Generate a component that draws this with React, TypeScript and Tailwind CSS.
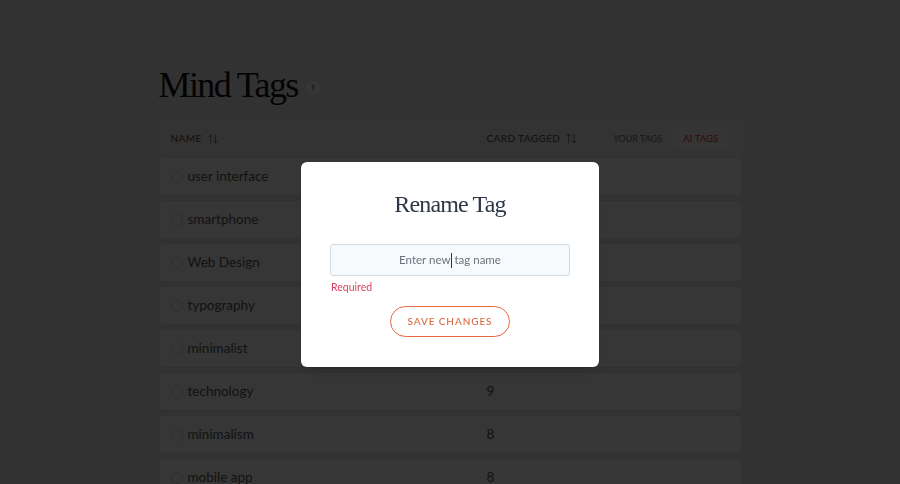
import React from 'react';
import { ArrowUpDown } from 'lucide-react';

const tags = [
  { name: 'user interface', count: 12 },
  { name: 'smartphone', count: 11 },
  { name: 'Web Design', count: 11 },
  { name: 'typography', count: 10 },
  { name: 'minimalist', count: 10 },
  { name: 'technology', count: 9 },
  { name: 'minimalism', count: 8 },
  { name: 'mobile app', count: 8 },
];

const sans = "font-['Lato','Noto_Sans',sans-serif]";
const serif = "font-['Liberation_Serif','DejaVu_Serif',serif]";

function TagsPage() {
  return (
    <div className={`min-h-screen bg-[#ededed] ${sans}`}>
      <div className="mx-auto w-[583px] pt-[67px]">
        <div className="flex items-center gap-[8px]">
          <h1 className={`${serif} text-[36px] leading-[36px] tracking-[-0.045em] text-[#111]`}>Mind Tags</h1>
          <span className="mt-[6px] flex h-[14px] w-[14px] items-center justify-center rounded-full bg-white text-[8px] font-bold text-[#555]">
            ?
          </span>
        </div>

        <div className="mt-[17px] flex h-[37px] items-center bg-[#f2f2f2] pl-[12px] pr-[13px] text-[10px] font-medium uppercase tracking-[0.04em] text-[#555]">
          <div className="flex w-[316px] items-center gap-[5px]">
            NAME <ArrowUpDown size={12} strokeWidth={1.5} />
          </div>
          <div className="flex items-center gap-[5px]">
            CARD TAGGED <ArrowUpDown size={13} strokeWidth={1.5} />
          </div>
          <div className="ml-auto flex items-center gap-[11px] text-[9px]">
            <span className="tracking-normal text-[#777]">YOUR TAGS</span>
            <span className="rounded-[3px] bg-[#f7f7f7] px-[10px] py-[4px] tracking-[0.04em] text-[#e53e3e]">AI TAGS</span>
          </div>
        </div>

        <div className="flex flex-col gap-[4px]">
          {tags.map((t) => (
            <div
              key={t.name}
              className="flex h-[39px] items-center rounded-[3px] border border-[#e6e6e6] bg-white pl-[11px] text-[13.5px] text-[#555]"
            >
              <div className="flex w-[316px] items-center gap-[5px]">
                <span className="h-[12px] w-[12px] rounded-full border border-[#d8d8d8]" />
                <span>{t.name}</span>
              </div>
              <span>{t.count}</span>
            </div>
          ))}
        </div>
      </div>
    </div>
  );
}

function RenameModal() {
  return (
    <div className="fixed inset-0 flex justify-center bg-black/[0.79] pt-[162px]">
      <div className={`flex h-[205px] w-[298px] flex-col items-center rounded-[6px] bg-white pt-[27px] shadow-lg ${sans}`}>
        <h2 className={`${serif} text-[24px] leading-[30px] tracking-[-0.035em] text-[#2d3748]`}>Rename Tag</h2>
        <div className="mt-[25px] w-[240px]">
          <div className="flex h-[32px] items-center justify-center rounded-[3px] border border-[#cfd8e3] bg-[#f7fafc] text-[11.5px] text-[#6b7280]">
            <span>Enter new</span>
            <span className="ml-px h-[15px] w-px bg-[#333]" />
            <span className="ml-[2px]">tag name</span>
          </div>
          <p className="mt-[5px] pl-px text-[10.5px] leading-[12px] text-[#d9405f]">Required</p>
        </div>
        <button className="mt-[13px] h-[31px] w-[120px] rounded-full border-[1.5px] border-[#e8683f] text-[10px] font-medium tracking-[0.09em] text-[#d9683f]">
          SAVE CHANGES
        </button>
      </div>
    </div>
  );
}

export default function App() {
  return (
    <div className="relative">
      <TagsPage />
      <RenameModal />
    </div>
  );
}
